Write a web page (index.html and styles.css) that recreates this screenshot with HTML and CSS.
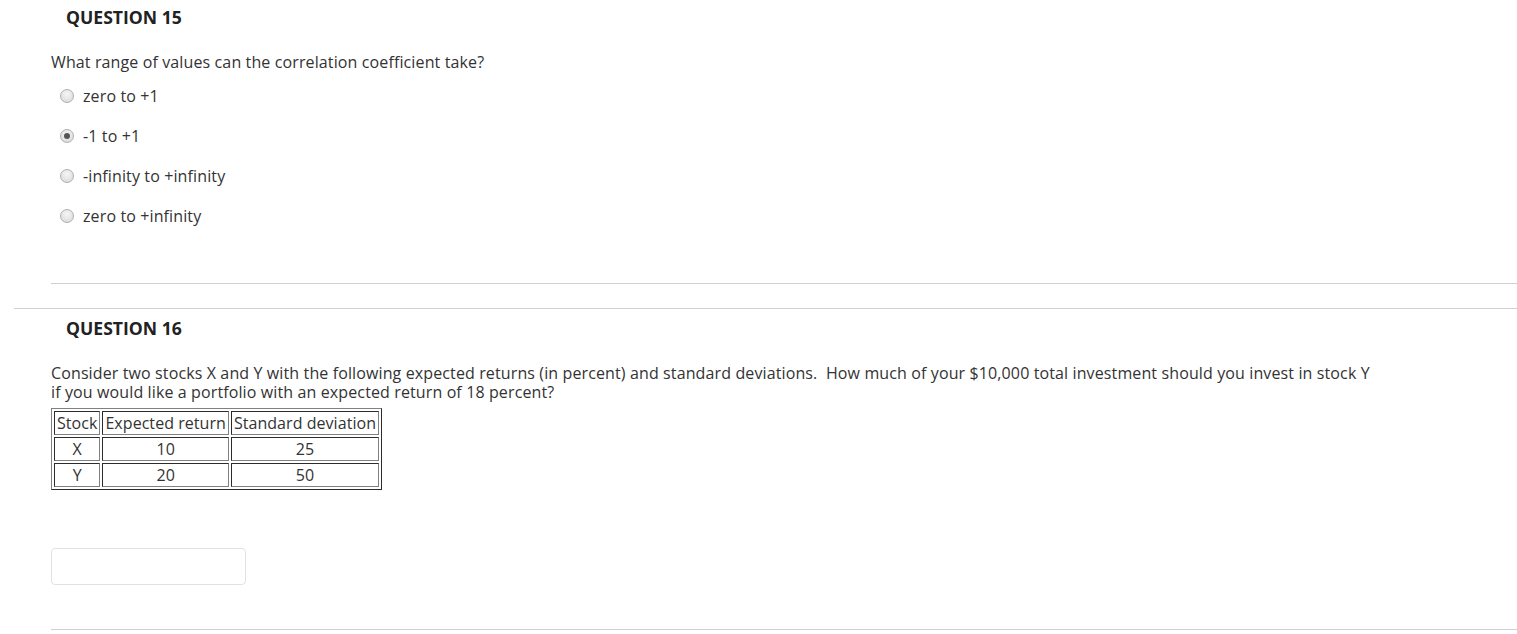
FILE: index.html
```html
<!DOCTYPE html>
<html>
<head>
<meta charset="utf-8">
<link rel="stylesheet" href="styles.css">
</head>
<body>
<div class="question">
  <h3 class="q-title">QUESTION 15</h3>
  <div class="q-body">
    <p class="q-text">What range of values can the correlation coefficient take?</p>
    <ul class="options">
      <li class="option"><span class="radio"></span><span class="label">zero to +1</span></li>
      <li class="option"><span class="radio checked"></span><span class="label">-1 to +1</span></li>
      <li class="option"><span class="radio"></span><span class="label">-infinity to +infinity</span></li>
      <li class="option"><span class="radio"></span><span class="label">zero to +infinity</span></li>
    </ul>
    <hr class="inner-rule q15-rule">
  </div>
</div>
<hr class="outer-rule">
<div class="question">
  <h3 class="q-title">QUESTION 16</h3>
  <div class="q-body">
    <p class="q-text para">Consider two stocks X and Y with the following expected returns (in percent) and standard deviations.&nbsp; How much of your $10,000 total investment should you invest in stock Y<br>if you would like a portfolio with an expected return of 18 percent?</p>
    <table class="data" border="1" cellspacing="2">
      <tr><td>Stock</td><td>Expected return</td><td>Standard deviation</td></tr>
      <tr><td>X</td><td>10</td><td>25</td></tr>
      <tr><td>Y</td><td>20</td><td>50</td></tr>
    </table>
    <div class="answer"></div>
    <hr class="inner-rule q16-rule">
  </div>
</div>
</body>
</html>
```
FILE: styles.css
```css
html, body {
  margin: 0;
  padding: 0;
  background: #fff;
}
body {
  font-family: "Open Sans", "Liberation Sans", sans-serif;
  color: #333;
  font-size: 16px;
  letter-spacing: 0.12px;
}
.q-title {
  margin: 0;
  padding: 6px 0 0 66px;
  font-size: 17.6px;
  font-weight: 700;
  line-height: 22px;
  color: #222;
  letter-spacing: 0;
}
.q-body {
  padding-left: 51px;
}
.q-text {
  margin: 24px 0 0 0;
  line-height: 20px;
}
.options {
  list-style: none;
  margin: 4px 0 0 0;
  padding: 0;
}
.option {
  display: flex;
  align-items: center;
  height: 40px;
}
.radio {
  box-sizing: border-box;
  width: 14px;
  height: 14px;
  border-radius: 50%;
  border: 1px solid #b0b0b0;
  background: radial-gradient(circle at 50% 35%, #f6f6f6 0%, #e0e0e0 70%, #d2d2d2 100%);
  margin-left: 9px;
  margin-right: 9px;
  position: relative;
}
.radio.checked::after {
  content: "";
  position: absolute;
  left: 3px;
  top: 3px;
  width: 6px;
  height: 6px;
  border-radius: 50%;
  background: #555;
}
.label {
  line-height: 20px;
}
.inner-rule {
  border: 0;
  border-top: 1px solid #d0d0d0;
  margin: 0;
}
.q15-rule { margin-top: 47px; }
.outer-rule {
  border: 0;
  border-top: 1px solid #d0d0d0;
  margin: 24px 0 0 14px;
}
.question + .outer-rule + .question .q-title { padding-top: 8px; }
.para {
  margin-top: 25px;
  line-height: 19px;
}
.data {
  margin-top: 6px;
  border-collapse: separate;
  font-size: 16px;
  color: #333;
  letter-spacing: 0.05px;
}
.data td {
  padding: 0 2px;
  text-align: center;
  line-height: 22px;
}
.answer {
  box-sizing: border-box;
  width: 195px;
  height: 37px;
  border: 1px solid #e2e2e2;
  border-radius: 4px;
  margin-top: 58px;
}
.q16-rule { margin-top: 44px; }
```
